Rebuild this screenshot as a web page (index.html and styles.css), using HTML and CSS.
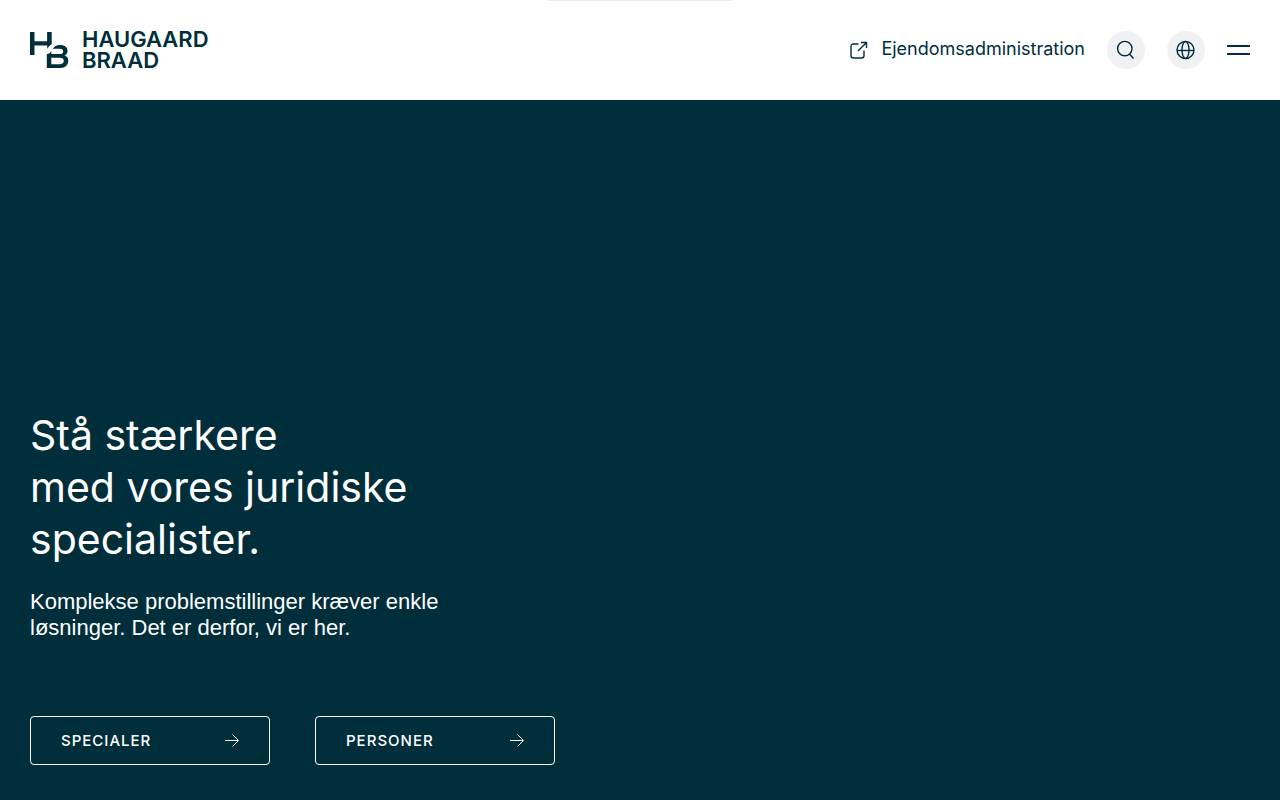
FILE: index.html
```html
<!DOCTYPE html>
<html lang="da">
<head>
  <meta charset="UTF-8">
  <meta name="viewport" content="width=device-width, initial-scale=1.0">
  <title>Haugaard Braad</title>
  <link rel="stylesheet" href="styles.css">
</head>
<body>

  <header class="header">
    <div class="tab"></div>

    <a class="logo" href="#">
      <svg class="logo-mark" viewBox="0 0 39 36" aria-hidden="true">
        <path d="M0 0H4.500V9.200H17.100V0H21.700V12.200C19.900 13.100 18.300 14.800 17.200 17.100V13.400H4.500V22.900H0z"/>
        <path fill-rule="evenodd" d="M16.800 36V22.300C18.800 21.900 20.300 20.700 21.300 19V22H29.600C31.900 22 33.200 21.100 33.200 19.400S31.900 16.800 29.600 16.800H23C24 14.400 26.500 13 30 13C35 13 37.500 15.200 37.500 18.800C37.500 21.100 36.500 22.700 34.500 23.500C36.900 24.300 38.300 26 38.300 28.600C38.300 33.100 35.300 36 30.200 36zM21.300 32.200H29.700C32.300 32.200 33.800 31 33.800 29S32.300 25.800 29.700 25.800H21.300z"/>
      </svg>
      <span class="logo-text">HAUGAARD<br>BRAAD</span>
    </a>

    <nav class="nav">
      <a class="nav-link" href="#">
        <svg class="icon-external" viewBox="0 0 18 18" aria-hidden="true">
          <path d="M8.500 3H3.500Q1 3 1 5.500V14.500Q1 17 3.500 17H11.500Q14 17 14 14.500V9.500M8 10L16.500 1.500M11 1.500H16.500V7"/>
        </svg>
        <span class="nav-text">Ejendomsadministration</span>
      </a>
      <button class="round" type="button" aria-label="Søg">
        <svg class="icon" viewBox="0 0 20 20" aria-hidden="true">
          <circle cx="8.800" cy="8.600" r="7.200"/>
          <path d="M13.500 14L17.500 18.500"/>
        </svg>
      </button>
      <button class="round" type="button" aria-label="Sprog">
        <svg class="icon" viewBox="0 0 20 20" aria-hidden="true">
          <circle cx="9.500" cy="10" r="8.500"/>
          <ellipse cx="9.500" cy="10" rx="3.500" ry="8.500"/>
          <path d="M1 10.500H18"/>
        </svg>
      </button>
      <button class="menu" type="button" aria-label="Menu"></button>
    </nav>
  </header>

  <main class="hero">
    <h1>Stå stærkere<br>med vores juridiske<br>specialister.</h1>
    <p>Komplekse problemstillinger kræver enkle<br>løsninger. Det er derfor, vi er her.</p>
    <div class="buttons">
      <a class="button" href="#">
        SPECIALER
        <svg class="arrow" viewBox="0 0 14 14" aria-hidden="true"><path d="M0 6.500H13M7.500 .5L13.500 6.500L7.500 12.500"/></svg>
      </a>
      <a class="button" href="#">
        PERSONER
        <svg class="arrow" viewBox="0 0 14 14" aria-hidden="true"><path d="M0 6.500H13M7.500 .5L13.500 6.500L7.500 12.500"/></svg>
      </a>
    </div>
  </main>

</body>
</html>
```
FILE: styles.css
```css
* {
  box-sizing: border-box;
}

body {
  display: flex;
  flex-direction: column;
  min-height: 100vh;
  margin: 0;
  background-color: #fff;
  color: #002e3b;
  font-family: Inter, "Liberation Sans", Arial, sans-serif;
}

a {
  color: inherit;
  text-decoration: none;
}

.header {
  position: relative;
  display: flex;
  align-items: center;
  justify-content: space-between;
  height: 100px;
  padding: 0 30px;
}

/* edge of the tab at the top of the page */
.tab {
  position: absolute;
  top: 0;
  left: 50%;
  width: 186px;
  height: 1px;
  margin-left: -93px;
  background-color: #e9eeed;
}

.logo {
  display: flex;
  align-items: center;
  gap: 13px;
}

.logo-mark {
  width: 39px;
  height: 36px;
  fill: #002e3b;
}

.logo-text {
  font-size: 22px;
  font-weight: 600;
  line-height: 21px;
}

.nav {
  display: flex;
  align-items: center;
  gap: 22px;
}

.nav-link {
  display: flex;
  align-items: center;
  gap: 13px;
  font-size: 18px;
}

.nav-text {
  padding-bottom: 3px;
}

.icon-external {
  width: 18px;
  height: 18px;
  fill: none;
  stroke: #002e3b;
  stroke-width: 1.4;
}

.round {
  display: flex;
  align-items: center;
  justify-content: center;
  width: 38px;
  height: 38px;
  padding: 0;
  border: none;
  border-radius: 50%;
  background-color: #f0f1f3;
  cursor: pointer;
}

.icon {
  width: 20px;
  height: 20px;
  fill: none;
  stroke: #002e3b;
  stroke-width: 1.4;
}

.menu {
  width: 23px;
  height: 10px;
  padding: 0;
  border: solid #002e3b;
  border-width: 2px 0;
  background: none;
  cursor: pointer;
}

.hero {
  display: flex;
  flex: 1;
  flex-direction: column;
  justify-content: flex-end;
  padding: 30px 30px 35px;
  background-color: #002e3b;
  color: #fff;
}

h1 {
  margin: 0 0 24px;
  font-size: 41px;
  font-weight: 400;
  line-height: 52px;
}

p {
  margin: 0 0 75px;
  font-family: "Liberation Sans", Arial, sans-serif;
  font-size: 22px;
  line-height: 26px;
}

.buttons {
  display: flex;
  flex-wrap: wrap;
  gap: 45px;
}

.button {
  display: flex;
  align-items: center;
  justify-content: space-between;
  width: 240px;
  height: 49px;
  padding: 0 30px;
  border: 1px solid #fff;
  border-radius: 4px;
  font-size: 15px;
  font-weight: 500;
  letter-spacing: 1px;
}

.arrow {
  width: 14px;
  height: 14px;
  fill: none;
  stroke: #fff;
}
```
